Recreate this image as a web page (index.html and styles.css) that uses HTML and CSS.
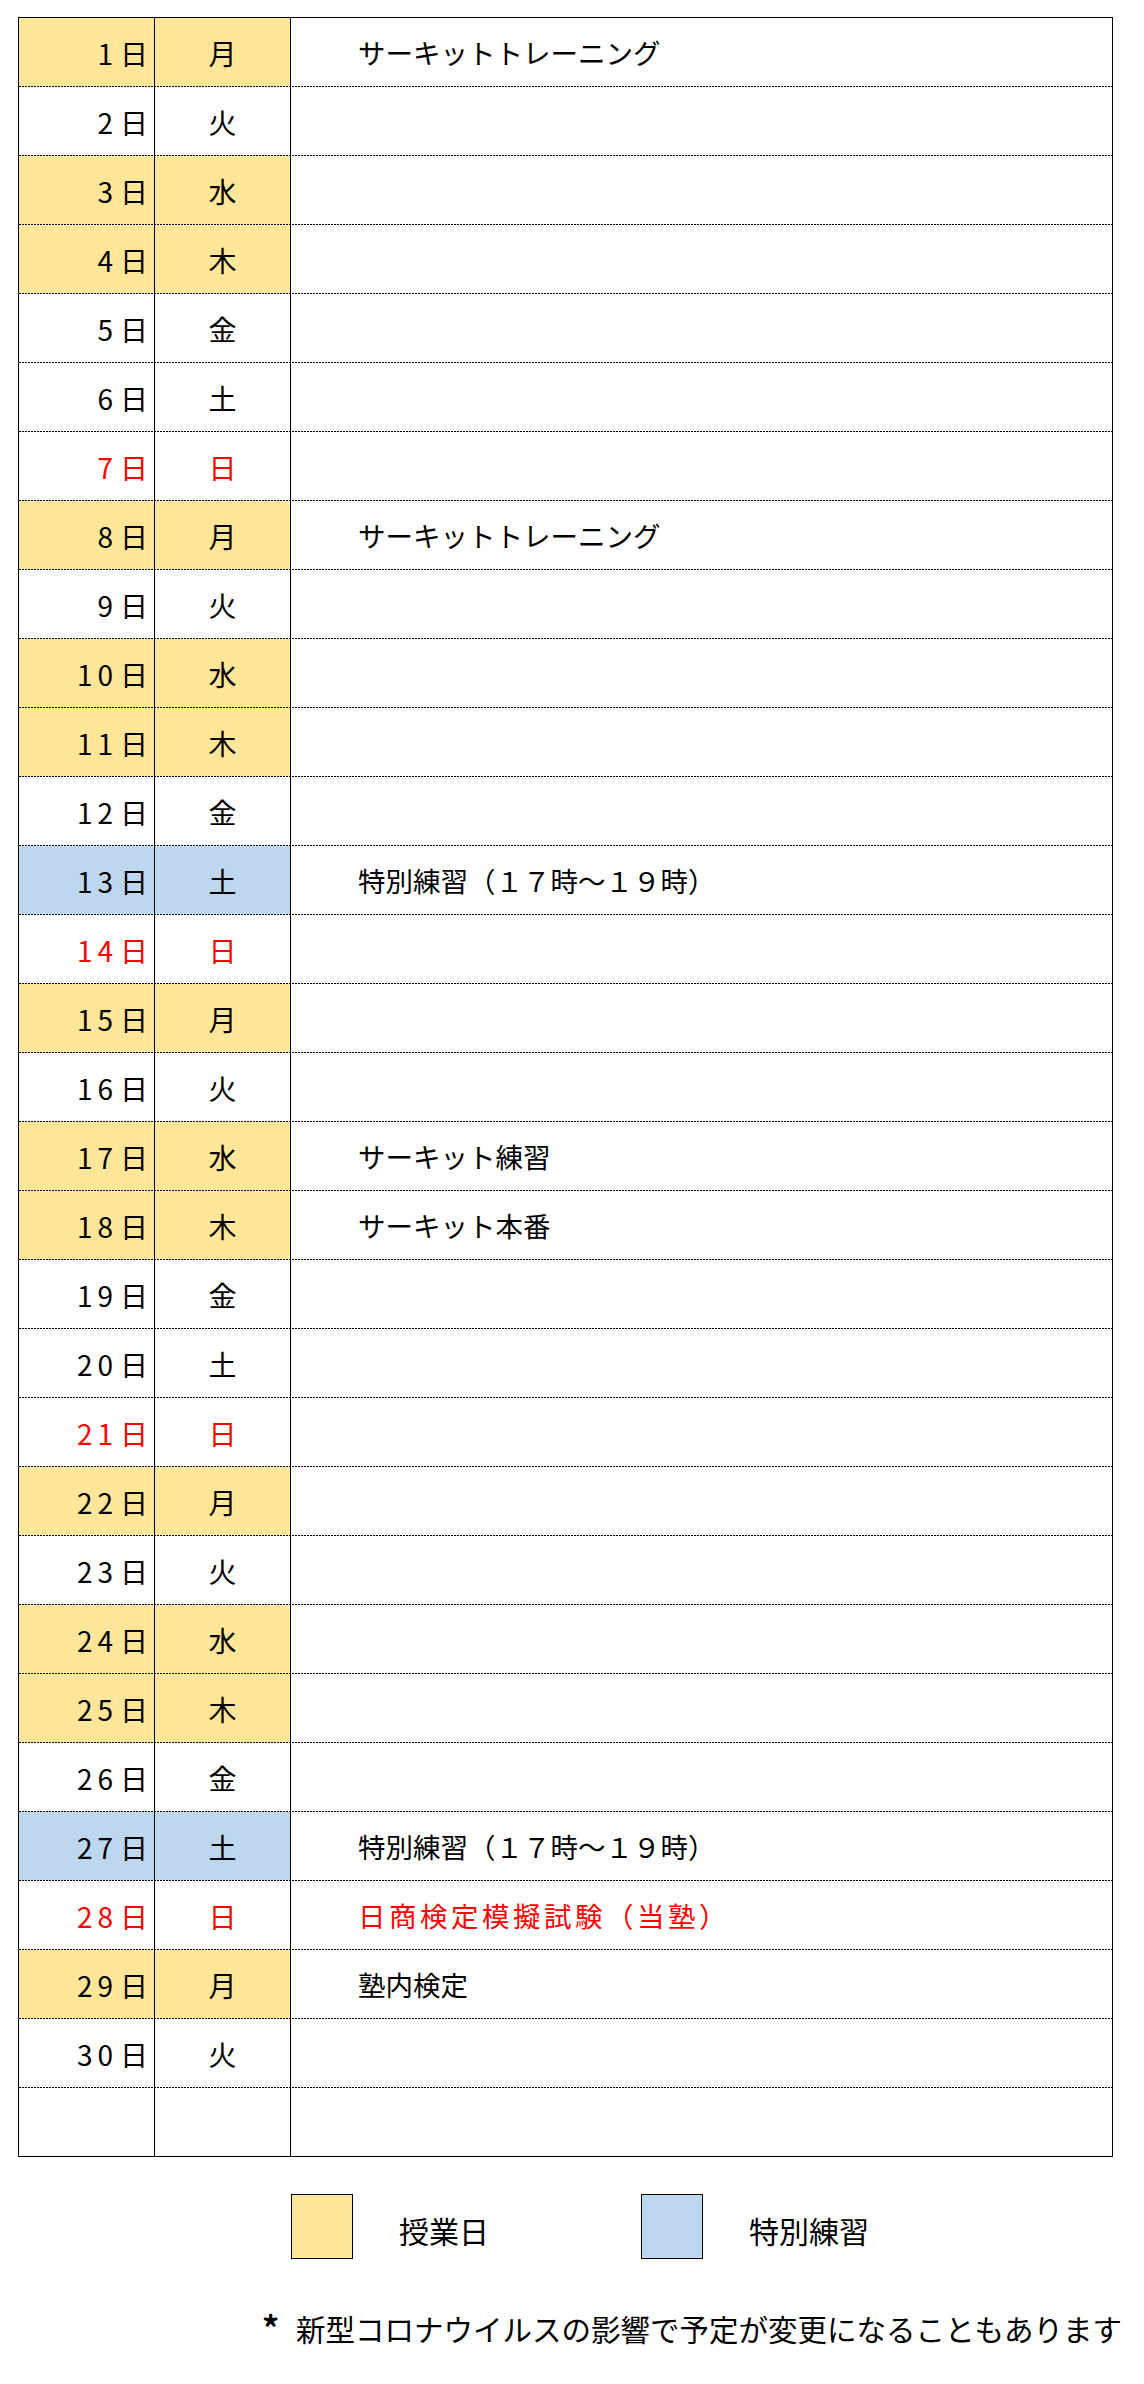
FILE: index.html
```html
<!DOCTYPE html>
<html lang="ja">
<head>
<meta charset="utf-8">
<title>予定表</title>
<link rel="stylesheet" href="styles.css">
</head>
<body>
<div class="sched">
  <div class="row y"><div class="day"><span class="n">1</span>日</div><div class="wd">月</div><div class="ev">サーキットトレーニング</div></div>
  <div class="row"><div class="day"><span class="n">2</span>日</div><div class="wd">火</div><div class="ev"></div></div>
  <div class="row y"><div class="day"><span class="n">3</span>日</div><div class="wd">水</div><div class="ev"></div></div>
  <div class="row y"><div class="day"><span class="n">4</span>日</div><div class="wd">木</div><div class="ev"></div></div>
  <div class="row"><div class="day"><span class="n">5</span>日</div><div class="wd">金</div><div class="ev"></div></div>
  <div class="row"><div class="day"><span class="n">6</span>日</div><div class="wd">土</div><div class="ev"></div></div>
  <div class="row red"><div class="day"><span class="n">7</span>日</div><div class="wd">日</div><div class="ev"></div></div>
  <div class="row y"><div class="day"><span class="n">8</span>日</div><div class="wd">月</div><div class="ev">サーキットトレーニング</div></div>
  <div class="row"><div class="day"><span class="n">9</span>日</div><div class="wd">火</div><div class="ev"></div></div>
  <div class="row y"><div class="day"><span class="n">10</span>日</div><div class="wd">水</div><div class="ev"></div></div>
  <div class="row y"><div class="day"><span class="n">11</span>日</div><div class="wd">木</div><div class="ev"></div></div>
  <div class="row"><div class="day"><span class="n">12</span>日</div><div class="wd">金</div><div class="ev"></div></div>
  <div class="row b"><div class="day"><span class="n">13</span>日</div><div class="wd">土</div><div class="ev">特別練習（１７時～１９時）</div></div>
  <div class="row red"><div class="day"><span class="n">14</span>日</div><div class="wd">日</div><div class="ev"></div></div>
  <div class="row y"><div class="day"><span class="n">15</span>日</div><div class="wd">月</div><div class="ev"></div></div>
  <div class="row"><div class="day"><span class="n">16</span>日</div><div class="wd">火</div><div class="ev"></div></div>
  <div class="row y"><div class="day"><span class="n">17</span>日</div><div class="wd">水</div><div class="ev">サーキット練習</div></div>
  <div class="row y"><div class="day"><span class="n">18</span>日</div><div class="wd">木</div><div class="ev">サーキット本番</div></div>
  <div class="row"><div class="day"><span class="n">19</span>日</div><div class="wd">金</div><div class="ev"></div></div>
  <div class="row"><div class="day"><span class="n">20</span>日</div><div class="wd">土</div><div class="ev"></div></div>
  <div class="row red"><div class="day"><span class="n">21</span>日</div><div class="wd">日</div><div class="ev"></div></div>
  <div class="row y"><div class="day"><span class="n">22</span>日</div><div class="wd">月</div><div class="ev"></div></div>
  <div class="row"><div class="day"><span class="n">23</span>日</div><div class="wd">火</div><div class="ev"></div></div>
  <div class="row y"><div class="day"><span class="n">24</span>日</div><div class="wd">水</div><div class="ev"></div></div>
  <div class="row y"><div class="day"><span class="n">25</span>日</div><div class="wd">木</div><div class="ev"></div></div>
  <div class="row"><div class="day"><span class="n">26</span>日</div><div class="wd">金</div><div class="ev"></div></div>
  <div class="row b"><div class="day"><span class="n">27</span>日</div><div class="wd">土</div><div class="ev">特別練習（１７時～１９時）</div></div>
  <div class="row red"><div class="day"><span class="n">28</span>日</div><div class="wd">日</div><div class="ev wide">日商検定模擬試験（当塾）</div></div>
  <div class="row y"><div class="day"><span class="n">29</span>日</div><div class="wd">月</div><div class="ev">塾内検定</div></div>
  <div class="row"><div class="day"><span class="n">30</span>日</div><div class="wd">火</div><div class="ev"></div></div>
  <div class="row"><div class="day"></div><div class="wd"></div><div class="ev"></div></div>
</div>

<div class="legend">
  <div class="item"><span class="swatch sw-y"></span><span class="label">授業日</span></div>
  <div class="item"><span class="swatch sw-b"></span><span class="label">特別練習</span></div>
</div>

<p class="note"><span class="ast">*</span>新型コロナウイルスの影響で予定が変更になることもあります</p>
</body>
</html>
```

FILE: styles.css
```css
html, body {
  margin: 0;
  padding: 0;
  background: #fff;
}

body {
  font-family: "Noto Sans CJK JP", "Noto Sans", sans-serif;
  color: #000;
  width: 1144px;
}

.sched {
  margin: 17px 0 0 18px;
  width: 1095px;
  border: 1px solid #000;
  box-sizing: border-box;
}

.row {
  display: grid;
  grid-template-columns: 136px 136px 1fr;
  height: 69px;
  padding-bottom: 1px;
  box-sizing: border-box;
  font-size: 28px;
  background: repeating-linear-gradient(to right, #000 0 2px, transparent 2px 3px) left bottom / 100% 1px no-repeat;
}

.row:last-child {
  padding-bottom: 0;
  height: 68px;
  background: none;
}

.row > div {
  display: flex;
  align-items: center;
  padding-top: 1px;
  box-sizing: border-box;
  line-height: 1;
}

.day {
  justify-content: flex-end;
  padding-right: 6px;
  border-right: 1px solid #000;
}

.n {
  letter-spacing: 5px;
  margin-right: 2px;
}

.wd {
  justify-content: center;
  border-right: 1px solid #000;
}

.row > .ev {
  padding-left: 67px;
  font-size: 27.5px;
}

.row > .wide {
  letter-spacing: 3.5px;
}

.y .day, .y .wd {
  background: #ffe699;
}

.b .day, .b .wd {
  background: #bdd7ee;
}

.red .day, .red .wd, .red .ev {
  color: #ff0000;
}

.legend {
  display: flex;
  align-items: center;
  padding-left: 291px;
  margin-top: 37px;
}

.item {
  display: flex;
  align-items: center;
}

.item + .item {
  margin-left: 152px;
}

.swatch {
  display: block;
  width: 62px;
  height: 65px;
  border: 1px solid #000;
  box-sizing: border-box;
}

.sw-y { background: #ffe699; }
.sw-b { background: #bdd7ee; }

.label {
  font-size: 30px;
  margin-left: 46px;
  line-height: 1;
  padding-top: 6px;
}

.note {
  margin: 48px 0 0 0;
  padding-left: 262px;
  font-size: 29.5px;
  line-height: 40px;
  white-space: nowrap;
}

.ast {
  display: inline-block;
  width: 34px;
  font-size: 34px;
  font-weight: bold;
}
```
